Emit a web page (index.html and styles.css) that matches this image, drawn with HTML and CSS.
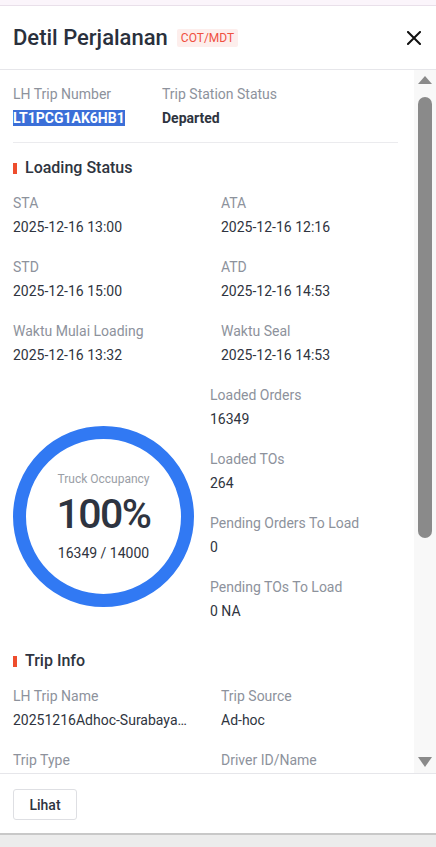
FILE: index.html
```html
<!DOCTYPE html>
<html lang="id">
<head>
<meta charset="utf-8">
<title>Detil Perjalanan</title>
<link rel="stylesheet" href="styles.css">
</head>
<body>
<div class="topstrip"></div>
<div class="modal">
  <header class="modal-header">
    <h1 class="title">Detil Perjalanan</h1>
    <span class="tag">COT/MDT</span>
    <button class="close" aria-label="Tutup">
      <svg width="14" height="14" viewBox="0 0 14 14"><path d="M1 1L13 13M13 1L1 13" stroke="#111" stroke-width="2" stroke-linecap="square"/></svg>
    </button>
  </header>
  <div class="modal-body">
    <div class="content">
      <div class="grid top-grid">
        <div class="field">
          <div class="label">LH Trip Number</div>
          <div class="value strong"><span class="selected">LT1PCG1AK6HB1</span></div>
        </div>
        <div class="field">
          <div class="label">Trip Station Status</div>
          <div class="value strong">Departed</div>
        </div>
      </div>
      <div class="divider"></div>

      <h2 class="section-title">Loading Status</h2>
      <div class="grid fields">
        <div class="field"><div class="label">STA</div><div class="value">2025-12-16 13:00</div></div>
        <div class="field"><div class="label">ATA</div><div class="value">2025-12-16 12:16</div></div>
        <div class="field"><div class="label">STD</div><div class="value">2025-12-16 15:00</div></div>
        <div class="field"><div class="label">ATD</div><div class="value">2025-12-16 14:53</div></div>
        <div class="field"><div class="label">Waktu Mulai Loading</div><div class="value">2025-12-16 13:32</div></div>
        <div class="field"><div class="label">Waktu Seal</div><div class="value">2025-12-16 14:53</div></div>
      </div>

      <div class="occupancy">
        <div class="ring">
          <div class="ring-label">Truck Occupancy</div>
          <div class="ring-pct">100%</div>
          <div class="ring-count">16349 / 14000</div>
        </div>
        <div class="stack">
          <div class="field"><div class="label">Loaded Orders</div><div class="value">16349</div></div>
          <div class="field"><div class="label">Loaded TOs</div><div class="value">264</div></div>
          <div class="field"><div class="label">Pending Orders To Load</div><div class="value">0</div></div>
          <div class="field"><div class="label">Pending TOs To Load</div><div class="value">0 NA</div></div>
        </div>
      </div>

      <h2 class="section-title trip">Trip Info</h2>
      <div class="grid fields">
        <div class="field"><div class="label">LH Trip Name</div><div class="value ellipsis">20251216Adhoc-Surabaya-Jakarta</div></div>
        <div class="field"><div class="label">Trip Source</div><div class="value">Ad-hoc</div></div>
        <div class="field"><div class="label">Trip Type</div><div class="value">Ad-hoc</div></div>
        <div class="field"><div class="label">Driver ID/Name</div><div class="value">-</div></div>
      </div>
    </div>
    <div class="scrollbar">
      <div class="arrow up"></div>
      <div class="track"><div class="thumb"></div></div>
      <div class="arrow down"></div>
    </div>
  </div>
  <footer class="modal-footer">
    <button class="btn">Lihat</button>
  </footer>
</div>
<div class="bottom"></div>
</body>
</html>
```

FILE: styles.css
```css
* { box-sizing: border-box; }
html, body { margin: 0; padding: 0; }
body {
  width: 436px;
  height: 847px;
  overflow: hidden;
  font-family: Roboto, "Noto Sans", Arial, sans-serif;
  background: #ececec;
  display: flex;
  flex-direction: column;
}
.topstrip {
  height: 6px;
  background: #fbf5fb;
  border-bottom: 1px solid #e9e0ea;
  flex: none;
}
.modal {
  background: #fff;
  height: 827px;
  display: flex;
  flex-direction: column;
  flex: none;
}
.modal-header {
  height: 64px;
  flex: none;
  display: flex;
  align-items: center;
  padding: 0 16px 0 13px;
  border-bottom: 1px solid #e6e6ea;
}
.title {
  margin: 0;
  font-size: 22px;
  font-weight: 500;
  color: #2a303c;
  letter-spacing: 0;
}
.tag {
  margin-left: 9px;
  background: #fdeeec;
  color: #f0503f;
  font-size: 12px;
  line-height: 18px;
  padding: 0 4px;
  border-radius: 2px;
  margin-top: 1px;
}
.close {
  margin-left: auto;
  border: 0;
  background: none;
  padding: 0;
  width: 14px;
  height: 14px;
  display: flex;
  margin-right: -1px;
  margin-top: 1px;
}
.modal-body {
  flex: 1;
  min-height: 0;
  display: flex;
}
.content {
  flex: 1;
  min-width: 0;
  overflow: hidden;
  padding: 14px 16px 0 13px;
}
.scrollbar {
  width: 22px;
  flex: none;
  background: #f8f8f8;
  display: flex;
  flex-direction: column;
  align-items: center;
}
.arrow {
  width: 0;
  height: 0;
  border-left: 7px solid transparent;
  border-right: 7px solid transparent;
}
.arrow.up {
  margin: 6px 0 0;
  border-bottom: 8px solid #8a8a8a;
}
.arrow.down {
  margin: 0 0 6px;
  border-top: 10px solid #8a8a8a;
}
.track {
  flex: 1;
  width: 100%;
  display: flex;
  justify-content: center;
  padding-top: 13px;
}
.thumb {
  width: 14px;
  height: 441px;
  background: #8a8a8a;
  border-radius: 7px;
}
.grid {
  display: grid;
  grid-template-columns: 174px 1fr;
  column-gap: 34px;
  row-gap: 20px;
}
.top-grid {
  grid-template-columns: 119px 1fr;
  column-gap: 30px;
}
.label {
  font-size: 14px;
  line-height: 20px;
  color: #8d929c;
  margin-bottom: 4px;
  white-space: nowrap;
}
.value {
  font-size: 14px;
  line-height: 20px;
  color: #2f3440;
  white-space: nowrap;
}
.value.strong {
  font-weight: 700;
  color: #2e3440;
}
.selected {
  background: #3b6fd8;
  color: #fff;
}
.ellipsis {
  overflow: hidden;
  text-overflow: ellipsis;
}
.divider {
  height: 1px;
  background: #ebebee;
  margin-top: 14px;
}
.section-title {
  margin: 13px 0 13px;
  font-size: 16px;
  line-height: 24px;
  font-weight: 500;
  color: #2e3440;
  display: flex;
  align-items: center;
  gap: 8px;
}
.section-title::before {
  content: "";
  width: 4px;
  height: 11px;
  background: #ee4d2d;
}
.section-title.trip {
  margin-top: 28px;
}
.occupancy {
  display: flex;
  margin-top: 20px;
}
.ring {
  width: 181px;
  height: 181px;
  margin-top: 41px;
  margin-right: 16px;
  border: 13px solid #3179f3;
  border-radius: 50%;
  display: flex;
  flex-direction: column;
  align-items: center;
  justify-content: center;
  flex: none;
}
.ring-label {
  font-size: 12px;
  line-height: 16px;
  color: #9a9ea6;
}
.ring-pct {
  font-size: 41px;
  line-height: 50px;
  font-weight: 500;
  letter-spacing: -1.5px;
  color: #2e3440;
  margin-top: 2px;
}
.ring-count {
  font-size: 14px;
  line-height: 20px;
  color: #2f3440;
  margin-top: 4px;
}
.stack {
  display: flex;
  flex-direction: column;
  gap: 20px;
}
.modal-footer {
  flex: none;
  height: 60px;
  border-top: 1px solid #e6e6ea;
  padding: 15px 13px 0;
}
.btn {
  height: 31px;
  width: 64px;
  border: 1px solid #dedfe3;
  border-radius: 3px;
  background: #fff;
  font-family: inherit;
  font-size: 14px;
  font-weight: 500;
  color: #2e3440;
  padding: 0;
}
.bottom {
  flex: none;
  height: 2px;
  background: #c8c8c8;
}
```
